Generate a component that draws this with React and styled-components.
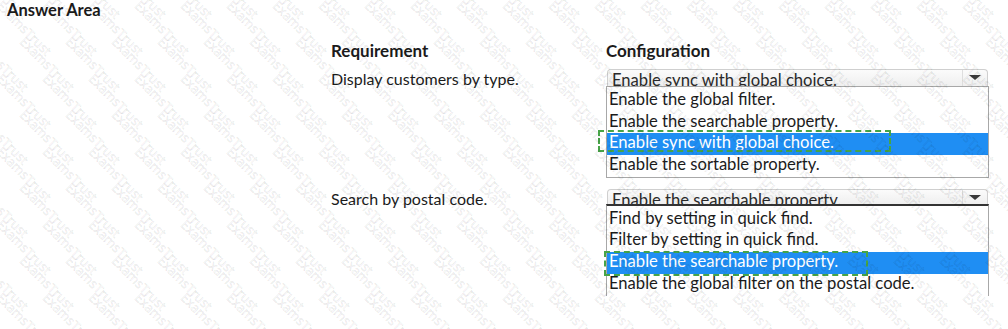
import React from 'react';
import styled, { createGlobalStyle } from 'styled-components';

const GlobalStyle = createGlobalStyle`
  html, body {
    margin: 0;
    padding: 0;
    background: #fff;
  }
  body {
    font-family: Lato, "Liberation Sans", sans-serif;
    color: #1b1b1b;
  }
`;

const Page = styled.div`
  position: relative;
  width: 1008px;
  height: 329px;
  overflow: hidden;
  background: #fff;
`;

const Title = styled.div`
  padding: 0 0 0 7px;
  font-size: 16.5px;
  font-weight: 700;
  line-height: 20px;
`;

const Table = styled.div`
  display: flex;
  flex-direction: column;
  margin: 21px 0 0 331px;
`;

const Row = styled.div`
  display: grid;
  grid-template-columns: 275px 383px;
  margin-top: ${p => p.$gap || 0}px;
`;

const HeadCell = styled.div`
  font-size: 17px;
  font-weight: 700;
  line-height: 20px;
`;

const ReqText = styled.div`
  font-size: 16px;
  line-height: 20px;
`;

const DropWrap = styled.div`
  display: flex;
  flex-direction: column;
  font-size: 16.6px;
`;

const Closed = styled.div`
  box-sizing: border-box;
  display: flex;
  height: ${p => (p.$dark ? 15 : 17)}px;
  margin: 0 1px;
  border: 1px solid #cfcfcf;
  border-bottom: none;
  border-radius: 4px 4px 0 0;
  background: linear-gradient(#fbfbfb, #efefef);
  overflow: hidden;
`;

const ClosedText = styled.div`
  flex: 1;
  padding: 1px 0 0 4px;
  line-height: 18.5px;
  white-space: nowrap;
  color: #2a2a2a;
`;

const ArrowCell = styled.div`
  width: 24px;
  display: flex;
  justify-content: center;
  padding-top: 5px;
  border-left: 1px solid #dedede;
`;

const Arrow = styled.span`
  width: 0;
  height: 0;
  border-left: 6px solid transparent;
  border-right: 6px solid transparent;
  border-top: 5px solid #3a3a3a;
`;

const List = styled.div`
  border: 1px solid #a8a8a8;
  border-top: ${p => (p.$dark ? '2px solid #333' : '1px solid #a8a8a8')};
  border-bottom: ${p => (p.$cut ? 'none' : '1px solid #a8a8a8')};
  padding-top: 3px;
  background: #fff;
`;

const Item = styled.div`
  position: relative;
  height: 21.7px;
  padding-left: 2px;
  line-height: 18px;
  white-space: nowrap;
  background: ${p => (p.$active ? '#1f8ef3' : 'transparent')};
  color: ${p => (p.$active ? '#fff' : '#1b1b1b')};
`;

const Marker = styled.div`
  position: absolute;
  left: ${p => p.$l}px;
  top: ${p => p.$t}px;
  width: ${p => p.$w}px;
  height: ${p => p.$h}px;
  box-sizing: border-box;
  border: 2px dashed #47a447;
`;

const Watermark = styled.div`
  position: absolute;
  inset: 0;
  pointer-events: none;
  z-index: 5;
  display: flex;
  flex-direction: column;
  margin-top: -27px;
`;

const WmRow = styled.div`
  display: flex;
  flex-shrink: 0;
  height: 36.5px;
  margin-left: ${p => (p.$odd ? 1 : -22)}px;
`;

const WmCell = styled.div`
  width: 46px;
  flex-shrink: 0;
  display: flex;
  align-items: center;
  justify-content: center;
`;

const WmWord = styled.span`
  display: inline-block;
  transform: rotate(45deg);
  font-family: "Open Sans", sans-serif;
  font-size: 13px;
  white-space: nowrap;
  color: rgba(0, 0, 0, 0.02);
  -webkit-text-stroke: 0.5px rgba(0, 0, 0, 0.12);
`;

function Dropdown({ value, options, selected, marker, dark, cut }) {
  return (
    <DropWrap>
      <Closed $dark={dark}>
        <ClosedText>{value}</ClosedText>
        <ArrowCell>
          <Arrow />
        </ArrowCell>
      </Closed>
      <List $dark={dark} $cut={cut}>
        {options.map((opt, i) => (
          <Item key={i} $active={i === selected}>
            {opt}
            {i === selected && (
              <Marker $l={marker.l} $t={marker.t} $w={marker.w} $h={marker.h} />
            )}
          </Item>
        ))}
      </List>
    </DropWrap>
  );
}

const rows = [
  {
    req: 'Display customers by type.',
    value: 'Enable sync with global choice.',
    options: [
      'Enable the global filter.',
      'Enable the searchable property.',
      'Enable sync with global choice.',
      'Enable the sortable property.',
    ],
    selected: 2,
    marker: { l: -9, t: -3, w: 293, h: 22 },
    gap: 8,
  },
  {
    req: 'Search by postal code.',
    value: 'Enable the searchable property.',
    options: [
      'Find by setting in quick find.',
      'Filter by setting in quick find.',
      'Enable the searchable property.',
      'Enable the global filter on the postal code.',
    ],
    selected: 2,
    marker: { l: -3, t: -1.5, w: 264, h: 25 },
    gap: 11,
    dark: true,
    cut: true,
  },
];

export default function App() {
  return (
    <Page>
      <GlobalStyle />
      <Title>Answer Area</Title>
      <Table>
        <Row>
          <HeadCell>Requirement</HeadCell>
          <HeadCell>Configuration</HeadCell>
        </Row>
        {rows.map((r, i) => (
          <Row key={i} $gap={r.gap}>
            <ReqText>{r.req}</ReqText>
            <Dropdown
              value={r.value}
              options={r.options}
              selected={r.selected}
              marker={r.marker}
              dark={r.dark}
              cut={r.cut}
            />
          </Row>
        ))}
      </Table>
      <Watermark>
        {Array.from({ length: 11 }).map((_, ri) => (
          <WmRow key={ri} $odd={ri % 2 === 1}>
            {Array.from({ length: 23 }).map((_, ci) => (
              <WmCell key={ci}>
                <WmWord>ExamsTrust</WmWord>
              </WmCell>
            ))}
          </WmRow>
        ))}
      </Watermark>
    </Page>
  );
}
